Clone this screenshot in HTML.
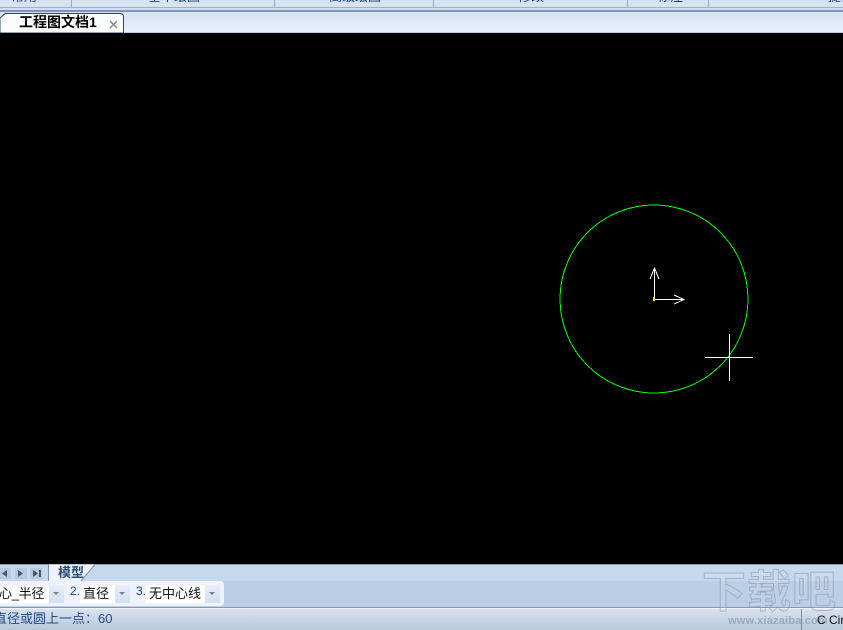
<!DOCTYPE html>
<html><head><meta charset="utf-8">
<style>
html,body{margin:0;padding:0;background:#000}
#p{position:relative;width:843px;height:630px;overflow:hidden;background:#000;font-family:"Liberation Sans","Noto Sans CJK SC",sans-serif}
.a{position:absolute}
.t{position:absolute;white-space:nowrap;line-height:16px}
.sep{position:absolute;top:0;width:1px;height:7px;background:#9aaac4}
.box{position:absolute;top:585px;height:18px;background:#fff}
.btn{position:absolute;top:585px;width:15px;height:18px;background:linear-gradient(#e6eefa,#cfdff2)}
.btn:after{content:"";position:absolute;left:4px;top:7px;border-left:3.5px solid transparent;border-right:3.5px solid transparent;border-top:3.5px solid #777f8c}
.sel{position:absolute;font-size:13px;color:#111;line-height:18px;top:585px;white-space:nowrap}
.n{position:absolute;font-size:12px;color:#1e3f78;line-height:14px;white-space:nowrap}
</style></head><body><div id="p">
<div class="a" style="left:0;top:0;width:843px;height:7px;background:#d8e3f1;overflow:hidden">
<div class="t" style="left:11px;top:-11px;font-size:13px;color:#1e3f78">常用</div>
<div class="t" style="left:148px;top:-11px;font-size:13px;color:#1e3f78">基本绘图</div>
<div class="t" style="left:329px;top:-11px;font-size:13px;color:#1e3f78">高级绘图</div>
<div class="t" style="left:518px;top:-11px;font-size:13px;color:#1e3f78">修改</div>
<div class="t" style="left:657px;top:-11px;font-size:13px;color:#1e3f78">标注</div>
<div class="t" style="left:828px;top:-11px;font-size:13px;color:#1e3f78">提取</div>
</div>
<div class="sep" style="left:71px"></div><div class="sep" style="left:274px"></div><div class="sep" style="left:433px"></div><div class="sep" style="left:627px"></div><div class="sep" style="left:708px"></div>
<div class="a" style="left:0;top:7px;width:843px;height:1px;background:#9fb0c9"></div>
<div class="a" style="left:0;top:8px;width:843px;height:2px;background:#d3dff0"></div>
<div class="a" style="left:0;top:10px;width:843px;height:2px;background:#7f94b7"></div>
<div class="a" style="left:0;top:12px;width:843px;height:20px;background:linear-gradient(#d5e2f2,#e9f1fc)"></div>
<div class="a" style="left:0;top:32px;width:843px;height:1px;background:#b8cfee"></div>
<svg class="a" style="left:0;top:12px" width="126" height="21"><path d="M0 6 L5 1.500 H120 Q123.500 1.500 123.500 5 V21 H0Z" fill="#fafcff" stroke="#33476e" stroke-width="1"/></svg>
<div class="t" style="left:19px;top:14px;font-size:14px;font-weight:bold;color:#000">工程图文档1</div>
<svg class="a" style="left:109px;top:20px" width="9" height="9"><path d="M1 1L8 8M8 1L1 8" stroke="#7b8490" stroke-width="1.300"/></svg>

<svg class="a" style="left:0;top:33px" width="843" height="531" shape-rendering="crispEdges">
<circle cx="654" cy="266" r="94" fill="none" stroke="#00ff00" stroke-width="1"/>
<path d="M654.500 267V235M684 266.500H654M705 324.500H753M729.500 301V348" stroke="#fff" stroke-width="1" fill="none"/>
<path d="M650 246L654.500 235L659 246M674 262L684 266.500L674 271" stroke="#fff" stroke-width="1" fill="none"/>
<rect x="653" y="264" width="2" height="4" fill="#ffee00"/>
</svg>

<div class="a" style="left:0;top:564px;width:843px;height:1px;background:#8e99a8"></div>
<div class="a" style="left:0;top:565px;width:843px;height:16px;background:#c6d8ee"></div>
<div class="a" style="left:0;top:581px;width:843px;height:26px;background:#bbcee5"></div>
<svg class="a" style="left:0;top:568px" width="48" height="12"><rect x="0" y="0" width="11" height="11" fill="#b6c9e2"/><rect x="15" y="0" width="12" height="11" fill="#b6c9e2"/><rect x="30" y="0" width="12" height="11" fill="#b6c9e2"/><path d="M7 2V9L2 5.500ZM18 2V9L23 5.500ZM33 2V9L38 5.500ZM39 2H41V9H39Z" fill="#4a5668"/></svg>
<svg class="a" style="left:48px;top:564px" width="50" height="18"><path d="M0.500 18V0.500H47L33 17H0.500" fill="#eef4fc"/><path d="M0.500 18V0.500M47 0.500L33 17" stroke="#7d90ae" fill="none"/></svg>
<div class="t" style="left:58px;top:565px;font-size:13px;font-weight:bold;color:#2c4a78">模型</div>

<div class="a" style="left:0;top:581px;width:224px;height:25px;background:#eef3fb;border-radius:0 4px 4px 0"></div>
<div class="box" style="left:0;width:49px"></div><div class="sel" style="left:-1px;letter-spacing:-.3px">心_半径</div><div class="btn" style="left:49px"></div>
<div class="n" style="left:70px;top:584px">2.</div>
<div class="box" style="left:80px;width:35px"></div><div class="sel" style="left:83px">直径</div><div class="btn" style="left:115px"></div>
<div class="n" style="left:136px;top:584px">3.</div>
<div class="box" style="left:146px;width:59px"></div><div class="sel" style="left:149px">无中心线</div><div class="btn" style="left:205px"></div>

<div class="a" style="left:0;top:607px;width:843px;height:1px;background:#8297c0"></div>
<div class="a" style="left:0;top:608px;width:843px;height:1px;background:#f2f6fc"></div>
<div class="a" style="left:0;top:609px;width:843px;height:21px;background:linear-gradient(#d8e2f0,#b9c8dd)"></div>
<div class="t" style="left:-6px;top:611px;font-size:13px;color:#24497f">直径或圆上一点：60</div>

<div class="t" style="left:702px;top:570px;line-height:46px;font-size:44px;font-weight:bold;letter-spacing:1px;color:rgba(255,255,255,.08);-webkit-text-stroke:1px rgba(130,145,165,.55)">下载吧</div>
<div class="t" style="left:728px;top:613px;font-size:11px;font-weight:bold;letter-spacing:.2px;color:rgba(120,135,155,.55)">www.xiazaiba.com</div>
<div class="a" style="left:801px;top:609px;width:1px;height:21px;background:#7c8ba3"></div>
<div class="t" style="left:817px;top:612px;font-size:12px;color:#111">C Cir</div>
</div></body></html>
